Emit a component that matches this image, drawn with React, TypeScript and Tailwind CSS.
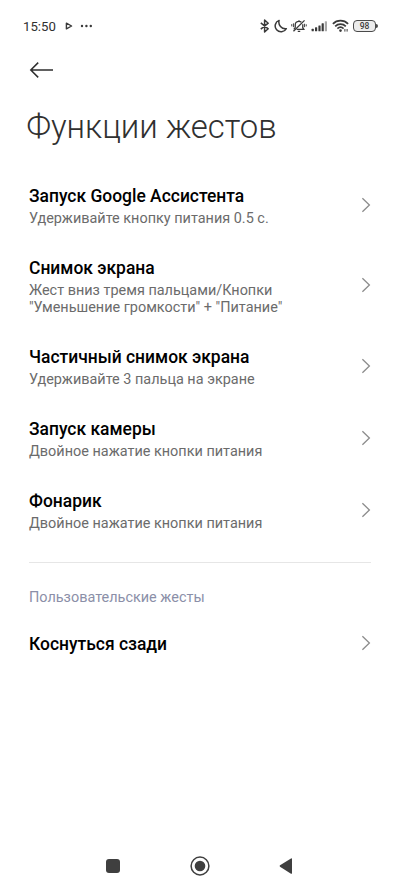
type Gesture = {
  title: string;
  lines?: string[];
};

const gestures: Gesture[] = [
  { title: 'Запуск Google Ассистента', lines: ['Удерживайте кнопку питания 0.5 с.'] },
  { title: 'Снимок экрана', lines: ['Жест вниз тремя пальцами/Кнопки', '"Уменьшение громкости" + "Питание"'] },
  { title: 'Частичный снимок экрана', lines: ['Удерживайте 3 пальца на экране'] },
  { title: 'Запуск камеры', lines: ['Двойное нажатие кнопки питания'] },
  { title: 'Фонарик', lines: ['Двойное нажатие кнопки питания'] },
];

const StatusBar = () => (
  <div className="flex h-[52px] items-center pl-[23px] pr-[22px] text-[#3a3a3a]">
    <span className="w-[33px] whitespace-nowrap pt-px text-[13.2px] leading-4 text-[#303030]">15:50</span>
    <svg className="ml-[9px]" width="8" height="10" viewBox="0 0 8 10" fill="none" stroke="currentColor">
      <path d="M1.4 2.2L6.6 5L1.4 7.8Z" strokeWidth="1.4" strokeLinejoin="round" />
    </svg>
    <svg className="ml-[7px]" width="13" height="4" viewBox="0 0 13 4" fill="currentColor">
      <circle cx="2" cy="2" r="1.2" />
      <circle cx="6.4" cy="2" r="1.2" />
      <circle cx="10.8" cy="2" r="1.2" />
    </svg>

    <div className="ml-auto flex items-center">
      {/* Bluetooth */}
      <svg width="10" height="14" viewBox="0 0 10 14" fill="none" stroke="currentColor" strokeWidth="1.5">
        <path d="M0.8 3.8L8.2 9.8L4.6 13V1L8.2 4.2L0.8 10.2" strokeLinejoin="round" />
      </svg>
      {/* Do not disturb */}
      <svg className="ml-[4px]" width="14" height="14" viewBox="0 0 14 14" fill="none" stroke="currentColor" strokeWidth="1.5">
        <path d="M5.1 1.4A5.9 5.9 0 1 0 12.3 9.7A6.6 6.6 0 0 1 5.1 1.4Z" strokeLinejoin="round" />
      </svg>
      {/* Muted bell */}
      <svg className="ml-[3px]" width="16" height="14" viewBox="0 0 17 14" fill="none" stroke="currentColor" strokeWidth="1.4">
        <path d="M4.5 8.8V5.7C4.5 3.6 6.2 2.1 8.5 2.1C9.6 2.1 10.3 2.4 11 2.9M12.5 5.2V8.8L13.6 10.6H6M8.5 0.8V2.1M7.2 12.8H9.8M3 10.6L4.5 8.8" />
        <path d="M2.6 12.6L14.4 1" />
        <path d="M2.6 4.2V8.2M0.8 5V7.4M14.4 4.6V8.2M16.2 5.2V7.4" strokeWidth="1" />
      </svg>
      {/* Mobile signal */}
      <svg className="ml-[4px]" width="17" height="12" viewBox="0 0 17 12" fill="currentColor">
        <rect x="0.6" y="8.8" width="2.2" height="2.4" rx="0.5" />
        <rect x="4" y="7.2" width="2.2" height="4" rx="0.5" />
        <rect x="7.4" y="5.4" width="2.2" height="5.8" rx="0.5" />
        <rect x="10.6" y="3.3" width="2.2" height="7.9" rx="0.5" />
        <rect x="13.8" y="1.2" width="2.2" height="10" rx="0.5" fill="#a8a8a8" />
      </svg>
      {/* Wi-Fi */}
      <svg className="ml-[4px]" width="18" height="14" viewBox="0 0 18 14" fill="none" stroke="currentColor" strokeWidth="1.7">
        <path d="M0.9 4.9C5 0.6 12 0.6 16.1 4.9" />
        <path d="M3.2 7.3C6.2 4.3 10.8 4.3 13.8 7.3" />
        <path d="M5.4 9.6C7.3 7.9 9.7 7.9 11.6 9.6" />
        <circle cx="8.5" cy="11.6" r="1.3" fill="currentColor" stroke="none" />
        <path d="M12.9 10V12.6M15.1 10V12.6" strokeWidth="1" />
      </svg>
      {/* Battery */}
      <div className="ml-[3px] flex items-center">
        <div className="flex h-[12px] w-[23px] items-center justify-center rounded-[4px] border border-[#4a4a4a] bg-[#ececec] pt-px text-[8.5px] font-medium leading-none">
          98
        </div>
        <div className="h-[4px] w-[2px] rounded-r-sm bg-[#4a4a4a]" />
      </div>
    </div>
  </div>
);

const Chevron = () => (
  <svg className="-mt-[2px] shrink-0" width="10" height="16" viewBox="0 0 10 16" fill="none" stroke="#8c8c8c" strokeWidth="1.3">
    <path d="M1.4 1.2L8.4 8L1.4 14.8" />
  </svg>
);

const GestureRow = ({ title, lines }: Gesture) => (
  <div className="flex items-center justify-between px-[29px] pb-[13.5px] pt-[16.5px]">
    <div>
      <div className="whitespace-nowrap text-[17.45px] font-medium leading-[23px] text-black">{title}</div>
      {lines && (
        <div className="pt-[2px]">
          {lines.map((line) => (
            <div key={line} className="whitespace-nowrap text-[14.45px] leading-[17px] text-[#6b6b6b]">
              {line}
            </div>
          ))}
        </div>
      )}
    </div>
    <Chevron />
  </div>
);

const App = () => {
  return (
    <div className="flex h-[889px] w-[400px] flex-col overflow-hidden bg-white font-['Roboto',sans-serif]">
      <StatusBar />

      <div className="flex h-[36px] items-center pl-[29px]">
        <svg width="25" height="18" viewBox="0 0 25 18" fill="none" stroke="#2e2e2e" strokeWidth="1.5">
          <path d="M9.2 1.6L1.8 9L9.2 16.4M1.8 9H24" />
        </svg>
      </div>

      <h1 className="mt-[18px] whitespace-nowrap pl-[26.5px] text-[32.9px] font-light leading-[42px] text-[#303030]">
        Функции жестов
      </h1>

      <div className="mt-[20px] flex flex-col">
        {gestures.map((gesture) => (
          <GestureRow key={gesture.title} {...gesture} />
        ))}
      </div>

      <div className="mx-[29px] mt-[17px] h-px bg-[#e6e6e6]" />

      <div className="mt-[25px] pl-[29px] text-[14.45px] leading-5 text-[#8b8fa8]">Пользовательские жесты</div>

      <div className="mt-[8px]">
        <GestureRow title="Коснуться сзади" />
      </div>

      {/* Navigation bar */}
      <div className="mt-auto flex h-[47px] items-center justify-between pl-[106px] pr-[107px] text-[#3f3f3f]">
        <div className="h-[14px] w-[14px] rounded-[3px] bg-[#3f3f3f]" />
        <svg width="20" height="20" viewBox="0 0 20 20" fill="none" stroke="currentColor">
          <circle cx="10" cy="10" r="8.9" strokeWidth="1.5" />
          <circle cx="10" cy="10" r="5.3" fill="currentColor" stroke="none" />
        </svg>
        <svg width="14" height="18" viewBox="0 0 14 18" fill="currentColor">
          <path d="M1 8.2Q0.2 9 1 9.7L12 16.7Q13 17.2 13 16V2Q13 0.8 12 1.4Z" />
        </svg>
      </div>
    </div>
  );
};

export default App;
